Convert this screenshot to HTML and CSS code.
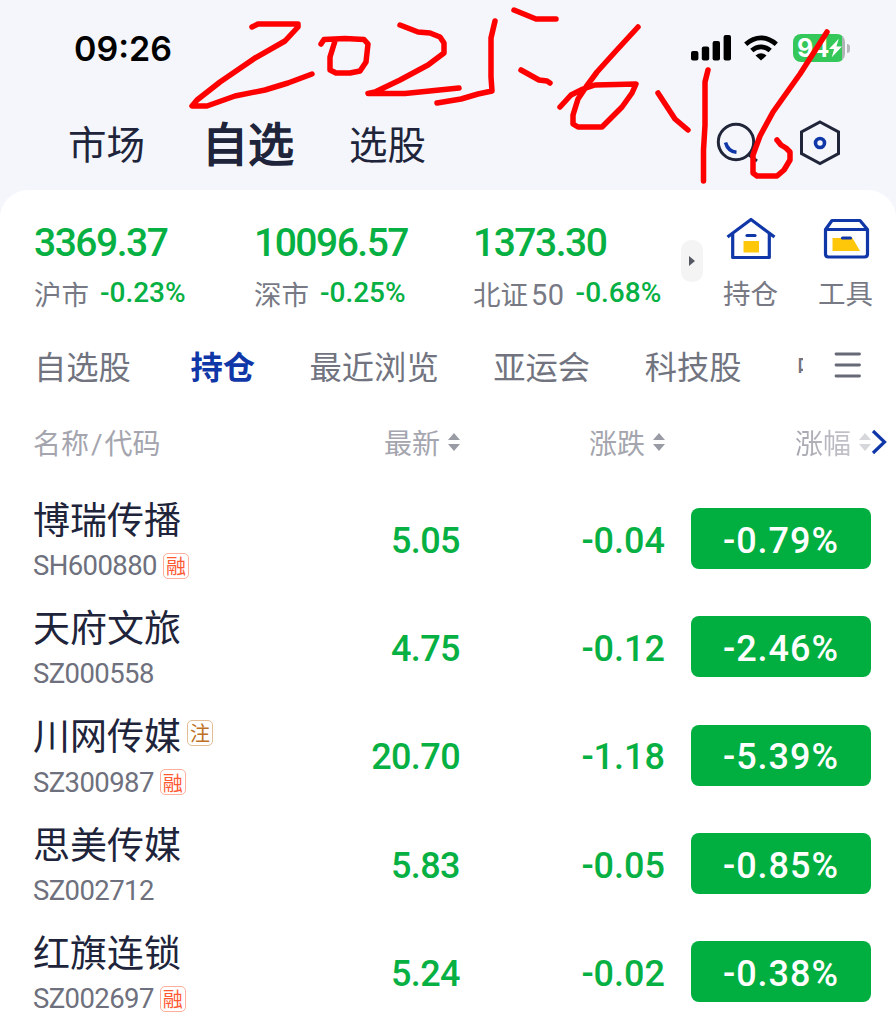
FILE: index.html
```html
<!DOCTYPE html>
<html lang="zh-CN">
<head>
<meta charset="utf-8">
<title>自选</title>
<link rel="stylesheet" href="styles.css">
</head>
<body>
<div class="phone">
  <header class="status">
    <span class="time">09:26</span>
    <div class="status-icons">
      <svg width="42" height="26" viewBox="0 0 42 26"><rect x="1" y="16" width="7.4" height="9.4" rx="2"/><rect x="11.8" y="11.500" width="7.4" height="13.900" rx="2"/><rect x="22.600" y="6" width="7.400" height="19.400" rx="2"/><rect x="33.600" y="0" width="7.400" height="25.400" rx="2"/></svg>
      <svg class="wifi" width="36" height="26" viewBox="0 0 36 26" fill="none" stroke="#000" stroke-width="4.800"><path d="M2.700 9.200Q10 2.800 18 2.800T33.300 9.200"/><path d="M8.800 15.500Q13 11.800 18 11.800T27.200 15.500"/><path d="M12.500 20.500Q18 16 23.500 20.500L18 25.600Z" fill="#000" stroke="none"/></svg>
      <div class="battery"><span>94</span><svg width="13" height="20" viewBox="0 0 14 20"><path d="M10.500 0L0 11H5.500L3 20L14 8.500H8Z" fill="#fff"/></svg></div>
      <i class="battery-tip"></i>
    </div>
  </header>
  <nav class="top-nav">
    <span>市场</span><span class="current">自选</span><span>选股</span>
    <div class="nav-icons">
      <svg width="42" height="46" viewBox="0 0 42 46" fill="none" stroke="#20253a" stroke-width="3"><circle cx="20" cy="22" r="17.700"/><path d="M33 35L41 41"/><path d="M9.500 22.500Q12 31.500 20.500 32.300" stroke="#1037a8" stroke-width="3.500"/></svg>
      <svg width="42" height="46" viewBox="0 0 42 46" fill="none" stroke="#20253a" stroke-width="3"><path d="M21 2L39.500 12V33.500L21 43.500L2.500 33.500V12Z"/><circle cx="21" cy="23" r="4.500" stroke="#1037a8" stroke-width="3.600"/></svg>
    </div>
  </nav>

  <main class="sheet">
    <section class="summary">
      <div class="index"><b>3369.37</b><div class="sub"><span>沪市</span><em>-0.23%</em></div></div>
      <div class="index"><b>10096.57</b><div class="sub"><span>深市</span><em>-0.25%</em></div></div>
      <div class="index"><b>1373.30</b><div class="sub"><span>北证<small>50</small></span><em>-0.68%</em></div></div>
      <div class="more"><svg width="6" height="10" viewBox="0 0 6 10"><path d="M0 0L6 5L0 10Z" fill="#555862"/></svg></div>
      <div class="shortcut">
        <svg width="50" height="44" viewBox="0 0 50 44" fill="none" stroke="#1037a8" stroke-width="3.200" stroke-linejoin="round"><path d="M1.500 20L25 2.500L48.500 20"/><path d="M6.700 17V40.500H43.300V17"/><rect x="17.500" y="24" width="15.500" height="11.500" fill="#ffc70a" stroke="none"/><path d="M21 18.500H29" stroke-linecap="round"/></svg>
        <span>持仓</span>
      </div>
      <div class="shortcut">
        <svg width="50" height="44" viewBox="0 0 50 44" fill="none" stroke="#1037a8" stroke-width="3.200" stroke-linejoin="round"><path d="M11 3.500H39L46.500 12.500V37Q46.500 40 43.500 40H7.500Q4.500 40 4.500 37V12.500Z"/><path d="M4.500 12.500H46.500"/><path d="M11.500 21H31.500L39 34H11.500Z" fill="#ffc70a" stroke="none"/><path d="M21.500 21H29.500" stroke-linecap="round"/></svg>
        <span>工具</span>
      </div>
    </section>

    <nav class="tabs">
      <span>自选股</span><span class="active">持仓</span><span>最近浏览</span><span>亚运会</span><span>科技股</span><span class="cut">中</span>
      <svg width="28" height="26" viewBox="0 0 28 26" stroke="#666a77" stroke-width="2.800" stroke-linecap="round"><path d="M2 2H25.500M2 13H25.500M2 24H25.500"/></svg>
    </nav>

    <div class="row head">
      <span class="first">名称<i>/</i>代码</span>
      <span class="cell">最新<svg class="sort" width="12" height="20" viewBox="0 0 12 20"><path d="M0 8L6 1L12 8ZM0 12H12L6 19Z"/></svg></span>
      <span class="cell">涨跌<svg class="sort" width="12" height="20" viewBox="0 0 12 20"><path d="M0 8L6 1L12 8ZM0 12H12L6 19Z"/></svg></span>
      <span class="last"><span class="fade">涨幅<svg class="sort pale" width="12" height="20" viewBox="0 0 12 20"><path d="M0 8L6 1L12 8ZM0 12H12L6 19Z"/></svg></span><svg width="16" height="26" viewBox="0 0 16 26" fill="none" stroke="#1037a8" stroke-width="3.200"><path d="M2 2L13.500 13L2 24"/></svg></span>
    </div>

    <div class="stocks">
      <div class="row stock"><div class="first"><div class="name">博瑞传播</div><div class="code">SH600880<span class="tag">融</span></div></div><span class="cell">5.05</span><span class="cell">-0.04</span><span class="pill">-0.79%</span></div>
      <div class="row stock"><div class="first"><div class="name">天府文旅</div><div class="code">SZ000558</div></div><span class="cell">4.75</span><span class="cell">-0.12</span><span class="pill">-2.46%</span></div>
      <div class="row stock"><div class="first"><div class="name">川网传媒<span class="tag note">注</span></div><div class="code">SZ300987<span class="tag">融</span></div></div><span class="cell">20.70</span><span class="cell">-1.18</span><span class="pill">-5.39%</span></div>
      <div class="row stock"><div class="first"><div class="name">思美传媒</div><div class="code">SZ002712</div></div><span class="cell">5.83</span><span class="cell">-0.05</span><span class="pill">-0.85%</span></div>
      <div class="row stock"><div class="first"><div class="name">红旗连锁</div><div class="code">SZ002697<span class="tag">融</span></div></div><span class="cell">5.24</span><span class="cell">-0.02</span><span class="pill">-0.38%</span></div>
    </div>
  </main>

  <svg class="ink" width="896" height="190" viewBox="0 0 896 190" fill="none" stroke="#f00" stroke-width="5.500" stroke-linecap="round" stroke-linejoin="round">
    <path d="M252 27L258 24H298V27L285 41L255 58L220 82L197 100L192 106H207L235 96L265 90L288 83L312 74"/>
    <path d="M321 44L324 39.500L345 38.500L364 39.500L368 44L366 62L360 71L350 73H336L330 70V57L335 41"/>
    <path d="M400 25L418 32L430 33L440 37L444 43V53L428 65L400 80L375 92L368 93.500H405L459 88"/>
    <path d="M495 21L491 38V77L492 91L478 94L461 99L437 103"/>
    <path d="M514 10L536 19H556M521 70L539 80L547 81L550 83"/>
    <path d="M638 27L615 52L597 72L586 87L578 99L573 115V124L578 127H602L622 107L632 93L636 84L595 85L583 89L571 95L560 107"/>
    <path d="M658 93L675 119L688 130M708 70L705 82V125L703.500 150V181"/>
    <path d="M827 32L800 74L773 112L760 136L753 155V173L757 176H777L784 170L790 160V152L786 148L781 145L777 140"/>
  </svg>
</div>
</body>
</html>
```
FILE: styles.css
```css
* { box-sizing: border-box; }
body { margin: 0; }
svg { display: block; flex: none; }
i, em { font-style: normal; }

.phone {
  position: relative;
  width: 896px;
  height: 1024px;
  overflow: hidden;
  background: #f4f6fb;
  font-family: Roboto, "Noto Sans CJK SC", sans-serif;
  color: #20243a;
  white-space: nowrap;
}

.status {
  display: flex;
  justify-content: space-between;
  align-items: center;
  height: 96px;
  padding: 0 46px 0 74px;
}
.time { font: 600 34px Inter, sans-serif; color: #000; }
.status-icons { display: flex; align-items: center; }
.wifi { margin-left: 11px; }
.battery {
  display: flex;
  align-items: center;
  width: 52px;
  height: 28px;
  margin-left: 14px;
  padding-left: 4px;
  border-radius: 8px;
  background: linear-gradient(90deg, #34c759 49px, #aeb5b4 49px);
  color: #fff;
  font: 700 25px Inter, sans-serif;
  letter-spacing: -.8px;
}
.battery-tip { width: 3px; height: 9px; margin-left: 2px; border-radius: 0 3px 3px 0; background: #b5b7bb; }

.top-nav {
  display: flex;
  align-items: center;
  height: 94px;
  padding: 0 55px 0 68px;
  font-size: 38.500px;
}
.top-nav > span { margin-bottom: 3px; }
.top-nav .current { margin: 0 55px 5px 57px; font-size: 46px; -webkit-text-stroke: 1.500px #20243a; }
.nav-icons { display: flex; gap: 41px; margin-left: auto; }

.sheet { height: 834px; border-radius: 28px 28px 0 0; background: #fff; }

.summary {
  display: grid;
  grid-template-columns: 220px 219px 208px 22px 95px 95px;
  height: 132px;
  padding-left: 34px;
  align-items: start;
}
.index b {
  display: block;
  margin-top: 31px;
  color: #07b043;
  font-size: 39px;
  font-weight: 500;
  line-height: 44px;
  letter-spacing: -1.500px;
}
.sub { display: flex; align-items: center; height: 40px; margin-top: 9px; }
.sub span { margin-top: -2px; color: #777985; font-size: 27.500px; }
.sub small { margin-left: 3px; font-size: 29px; letter-spacing: .5px; }
.sub em { margin: -4px 0 0 11px; color: #07b043; font-size: 28px; font-weight: 500; }
.more {
  display: flex;
  align-items: center;
  justify-content: center;
  width: 22px;
  height: 42px;
  margin-top: 50px;
  border-radius: 10px;
  background: #f4f4f5;
}
.shortcut { display: flex; flex-direction: column; align-items: center; padding-top: 27px; color: #777985; font-size: 27.500px; }
.shortcut span { margin-top: 14px; line-height: 40px; }

.tabs {
  display: flex;
  align-items: center;
  gap: 54.500px;
  height: 90px;
  padding-left: 34px;
  color: #71747f;
  font-size: 32.300px;
}
.tabs > span { margin-bottom: 5px; }
.tabs .active { margin-left: 5px; color: #1037a8; font-weight: 700; }
.tabs .cut { width: 7px; overflow: hidden; font-size: 30px; }
.tabs svg { margin: 0 0 4px -24px; }

.row { display: grid; grid-template-columns: 259px 168px 205px 206px; padding-left: 33px; align-items: center; }
.cell { text-align: right; }
.head { height: 62px; margin-top: -1px; color: #a4a5ae; font-size: 28px; }
.head i { margin: 0 2px; }
.head .cell, .head .last, .fade { display: flex; justify-content: flex-end; align-items: center; }
.head .last { margin-right: -16px; }
.sort { margin-left: 8px; fill: #9a9ca5; }
.pale { opacity: .4; }
.fade { background: linear-gradient(90deg, #a4a5ae, #cfd0d5); background-clip: text; color: transparent; }

.stocks { padding-top: 11.500px; }
.stock { height: 108.300px; }
.name { display: flex; align-items: center; height: 50px; font-size: 37px; }
.code { display: flex; align-items: center; height: 42px; padding-top: 4px; color: #6e717d; font-size: 27.500px; letter-spacing: -.6px; }
.tag {
  display: flex;
  align-items: center;
  justify-content: center;
  width: 26px;
  height: 26px;
  margin-left: 6px;
  border: 1.500px solid #ffaf9c;
  border-radius: 5px;
  color: #ff5933;
  font-size: 20px;
  letter-spacing: 0;
}
.note { margin-top: -3px; border-color: #e2bd95; color: #bd7124; }
.stock .cell { padding-top: 4px; color: #07b043; font-size: 36px; font-weight: 500; }
.stock .cell:nth-child(2) { letter-spacing: -.6px; }
.pill {
  display: flex;
  align-items: center;
  justify-content: center;
  width: 180px;
  height: 61px;
  margin-left: 26px;
  padding-top: 4px;
  border-radius: 8px;
  background: #00af40;
  color: #fff;
  font-size: 36px;
  font-weight: 500;
  letter-spacing: 1px;
}

.ink { position: absolute; left: 0; top: 0; }
```
